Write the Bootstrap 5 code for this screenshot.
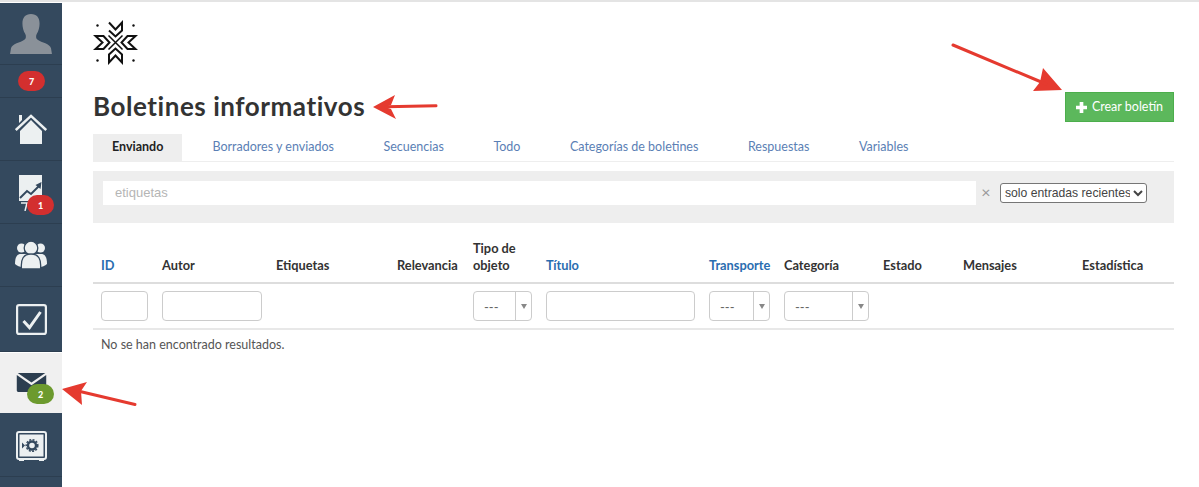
<!DOCTYPE html>
<html lang="es"><head><meta charset="utf-8">
<title>Boletines informativos</title>
<link href="https://cdn.jsdelivr.net/npm/bootstrap@5.3.0/dist/css/bootstrap.min.css" rel="stylesheet">
<style>
html,body{height:100%;}
body{font-family:"Lato","Liberation Sans",sans-serif;font-size:12.5px;color:#444;background:#fff;overflow:hidden;position:relative;}
.topline{height:3px;background:#fff;border-top:2px solid #e4e4e4;}
.shell{height:484px;}
.rail{width:62px;flex:none;background:#34495e;overflow:hidden;}
.railcell{height:63px;border-bottom:1px solid #2c3e50;position:relative;display:flex;align-items:center;justify-content:center;}
.railcell.c-user{height:62px;}
.railcell.c-count{height:33px;}
.railcell.c-check{height:65px;}
.railcell.c-active{background:#f0f0f0;height:61px;border-top:1px solid #fff;border-bottom:none;}
.railcell.c-safe{height:64px;}
.railcell svg.nudge-chart{margin-top:2px;}
.railcell svg.nudge-mail{margin-top:-2px;}
.railcell svg.nudge-safe{margin-top:3px;}
.pill{position:absolute;color:#fff;font-size:9px;font-weight:900;width:27px;height:20px;border-radius:10px;background:#d32f2f;display:flex;align-items:center;justify-content:center;line-height:1;}
.pill.p-green{background:#6c9a2e;}
.pill.p-count{left:18px;top:6px;}
.pill.p-chart{left:27px;top:34px;}
.pill.p-mail{left:27px;top:31px;}
.pagebody{flex:1;padding:17px 25px 0 31px;min-width:0;}
.titlerow{margin-top:27px;height:42px;}
.pagetitle{font-size:26px;font-weight:700;color:#333;margin:0;letter-spacing:.55px;line-height:29px;}
.btn-crear{background:#5cb85c;color:#fff;border:1px solid #4cae4c;border-radius:0;font-size:12.5px;height:30px;width:109px;padding:0;display:flex;align-items:center;justify-content:center;gap:5px;}
.btn-crear:hover{background:#4cae4c;color:#fff;}
.tabsbar{border-bottom:1px solid #eee;height:28px;}
.tabsbar .nav-link{color:#5b7fb5;font-size:12.5px;padding:0 19px;height:27px;line-height:25px;border-radius:0;margin-right:11.5px;}
.tabsbar .nav-link.active{background:#eee;color:#222;font-weight:700;margin-right:11px;}
.filterbox{background:#eee;height:52px;margin-top:9px;padding:10px;}
.tagfield{flex:1;height:24px;background:#fff;border:0;padding:0 12px 1px;font-family:"Liberation Sans",sans-serif;font-size:13px;color:#333;outline:0;border-radius:0;}
.tagfield::placeholder{color:#b5b5b5;}
.clearx{color:#999;font-size:16px;width:24px;padding-right:4px;text-align:center;line-height:22px;}
.recent{width:147px;height:20px;margin:2px 17px 0 0;font-family:"Liberation Sans",sans-serif;font-size:12.2px;color:#444;background:#fff;border:1px solid #767676;border-radius:3px;padding:0;}
.gridtbl{table-layout:fixed;width:1081px;margin:9px 0 0;border-collapse:collapse;}
.gridtbl th,.gridtbl td{padding:0 6px 0 8px;vertical-align:bottom;border:0;box-shadow:none;background:transparent;}
.gridtbl thead th{height:51px;padding-bottom:8px;font-size:12.8px;line-height:17px;font-weight:700;color:#333;border-bottom:2px solid #ddd;}
.gridtbl thead th.sortlink{color:#2a6db0;}
.gridtbl tbody tr.flt td{height:46px;vertical-align:middle;border-bottom:2px solid #e8e8e8;}
.gridtbl tbody tr.none td{font-size:12.5px;color:#555;padding-top:6px;height:30px;vertical-align:top;}
.fld{display:block;width:100%;height:30px;border:1px solid #ccc;border-radius:4px;background:#fff;outline:0;}
.chooser{height:30px;border:1px solid #ccc;border-radius:4px;display:flex;color:#666;font-size:13px;}
.chooser .chosen{flex:1;padding-left:10px;line-height:30px;}
.chooser .caretbox{width:16px;border-left:1px solid #ccc;display:flex;align-items:center;justify-content:center;}
.chooser .caretbox i{display:block;width:0;height:0;border-left:3.5px solid transparent;border-right:3.5px solid transparent;border-top:5px solid #888;}
.arrows{position:absolute;left:0;top:0;pointer-events:none;}
</style></head>
<body>
<div class="topline"></div>
<div class="d-flex shell">
<nav class="rail">
 <div class="railcell c-user"><svg width="42" height="40" viewBox="0 0 44 42"><path fill="#8a9199" d="M22 0c-6 0-9 4-9 10 0 4 1 8 3 11 1 2 1 5-1 6-4 3-13 4-14 9l-1 6h44l-1-6c-1-5-10-6-14-9-2-1-2-4-1-6 2-3 3-7 3-11 0-6-3-10-9-10z"/></svg></div>
 <div class="railcell c-count"><span class="pill p-count">7</span></div>
 <div class="railcell"><svg width="32" height="30" viewBox="0 0 32 30"><g fill="#ecf0f1"><path d="M4 1h3v5l-3 3zM5 17 16 6l11 11v13H5z"/></g><path fill="none" stroke="#ecf0f1" stroke-width="2.400" d="M.8 16 16 1.800 31.200 16"/></svg></div>
 <div class="railcell"><svg class="nudge-chart" width="26" height="36" viewBox="0 0 26 36"><path fill="#ecf0f1" d="M1 0h23v26H1z"/><path fill="none" stroke="#34495e" stroke-width="2" d="M2 23l7-7 4 3 9-9"/><path fill="#34495e" d="M23.500 7l-1 7-5-4z"/><path fill="none" stroke="#ecf0f1" stroke-width="1.500" d="M3 28h13M9 28l-2 8"/></svg><span class="pill p-chart">1</span></div>
 <div class="railcell"><svg width="32" height="28" viewBox="0 0 32 28"><g fill="#ecf0f1"><circle cx="6.500" cy="7" r="4.500"/><circle cx="25.500" cy="7" r="4.500"/><path d="M0 23c0-7 2-10 6-10h20c4 0 6 3 6 10-2 2-5 3-7 3H7c-2 0-5-1-7-3z"/></g><g fill="#ecf0f1" stroke="#34495e" stroke-width="1.300"><circle cx="16" cy="7" r="6.800"/><path d="M6.500 28c-1-10 2-15 9.500-15s10.500 5 9.500 15z"/></g></svg></div>
 <div class="railcell c-check"><svg width="31" height="31" viewBox="0 0 31 31"><rect x="1.100" y="1.100" width="28.800" height="28.800" rx="2" fill="none" stroke="#ecf0f1" stroke-width="2.200"/><path fill="none" stroke="#ecf0f1" stroke-width="3" d="M7.500 17l6 6.500L24.500 8"/></svg></div>
 <div class="railcell c-active"><svg class="nudge-mail" width="31" height="19" viewBox="0 0 31 20"><path fill="#2c3e50" d="M1 0h29l-14.500 10zM0 2l15.500 11L31 2v16.500a1.500 1.500 0 0 1-1.500 1.500h-28A1.500 1.500 0 0 1 0 18.500z"/></svg><span class="pill p-green p-mail">2</span></div>
 <div class="railcell c-safe"><svg class="nudge-safe" width="31" height="31" viewBox="0 0 31 31"><rect x="1" y="1" width="29" height="27" rx="2" fill="#34495e" stroke="#ecf0f1" stroke-width="2"/><rect x="3.500" y="3.500" width="24" height="22" fill="#ecf0f1"/><circle cx="16" cy="14.500" r="4" fill="none" stroke="#34495e" stroke-width="2.400"/><circle cx="16" cy="14.500" r="5.800" fill="none" stroke="#34495e" stroke-width="1.500" stroke-dasharray="2 1.400"/><path fill="#34495e" d="M6 11.500l3 3-3 3z"/><path fill="#ecf0f1" d="M3 28h5v2H3zM23 28h5v2h-5z"/></svg></div>
</nav>
<main class="pagebody">
 <svg width="45" height="45" viewBox="-22.500 -22.500 45 45" class="d-block"><g fill="none" stroke="#111" stroke-width="2" stroke-linejoin="miter"><path d="M-6.500-20 0-13 6.500-20V-12L0-6-6.500-12"/><path d="M-6.500 20 0 13 6.500 20V12L0 6-6.500 12z"/><path d="M-20-6.500-13 0-20 6.500H-12L-6 0-12-6.500z"/><path d="M20-6.500 13 0 20 6.500H12L6 0 12-6.500z"/></g><path fill="none" stroke="#111" stroke-width="1.500" d="M-7-7 7 7M7-7-7 7"/><g fill="#111"><circle cx="-18" cy="-17" r="1.200"/><circle cx="18" cy="-17" r="1.200"/><circle cx="-18" cy="18" r="1.200"/><circle cx="18" cy="18" r="1.200"/></g></svg>
 <div class="d-flex justify-content-between titlerow">
  <h1 class="pagetitle">Boletines informativos</h1>
  <a href="#" class="btn btn-crear"><svg width="11" height="11" viewBox="0 0 12 12"><path fill="#fff" d="M4 0h4v4h4v4H8v4H4V8H0V4h4z"/></svg>Crear boletín</a>
 </div>
 <ul class="nav tabsbar">
  <li class="nav-item"><a class="nav-link active" href="#">Enviando</a></li>
  <li class="nav-item"><a class="nav-link" href="#">Borradores y enviados</a></li>
  <li class="nav-item"><a class="nav-link" href="#">Secuencias</a></li>
  <li class="nav-item"><a class="nav-link" href="#">Todo</a></li>
  <li class="nav-item"><a class="nav-link" href="#">Categorías de boletines</a></li>
  <li class="nav-item"><a class="nav-link" href="#">Respuestas</a></li>
  <li class="nav-item"><a class="nav-link" href="#">Variables</a></li>
 </ul>
 <div class="filterbox d-flex align-items-start">
  <input class="tagfield" placeholder="etiquetas">
  <span class="clearx">×</span>
  <select class="recent"><option>solo entradas recientes</option></select>
 </div>
 <table class="table gridtbl">
  <colgroup><col style="width:61px"><col style="width:114px"><col style="width:121px"><col style="width:76px"><col style="width:73px"><col style="width:163px"><col style="width:75px"><col style="width:99px"><col style="width:80px"><col style="width:119px"><col style="width:100px"></colgroup>
  <thead><tr><th class="sortlink">ID</th><th>Autor</th><th>Etiquetas</th><th>Relevancia</th><th>Tipo de objeto</th><th class="sortlink">Título</th><th class="sortlink">Transporte</th><th>Categoría</th><th>Estado</th><th>Mensajes</th><th>Estadística</th></tr></thead>
  <tbody>
   <tr class="flt"><td><input class="fld"></td><td><input class="fld"></td><td></td><td></td>
    <td><div class="chooser"><span class="chosen">---</span><span class="caretbox"><i></i></span></div></td>
    <td><input class="fld"></td>
    <td><div class="chooser"><span class="chosen">---</span><span class="caretbox"><i></i></span></div></td>
    <td><div class="chooser"><span class="chosen">---</span><span class="caretbox"><i></i></span></div></td>
    <td></td><td></td><td></td></tr>
   <tr class="none"><td colspan="11">No se han encontrado resultados.</td></tr>
  </tbody>
 </table>
</main>
</div>
<svg class="arrows" width="1199" height="487" viewBox="0 0 1199 487"><g fill="#e53a2f">
 <path d="M373 107 395 95 391 105 385 107 391 109 396 119z"/>
 <path d="M1062 90 1033 91 1040 82 1043 68z"/>
 <path d="M62 389 87 382 81 391 82 405z"/>
</g><g fill="none" stroke="#e53a2f" stroke-width="3" stroke-linecap="round">
 <path d="M386 106.800 436 105.800"/>
 <path d="M953 45 1046 84"/>
 <path d="M78 391 135 404.500"/>
</g></svg>
</body></html>
